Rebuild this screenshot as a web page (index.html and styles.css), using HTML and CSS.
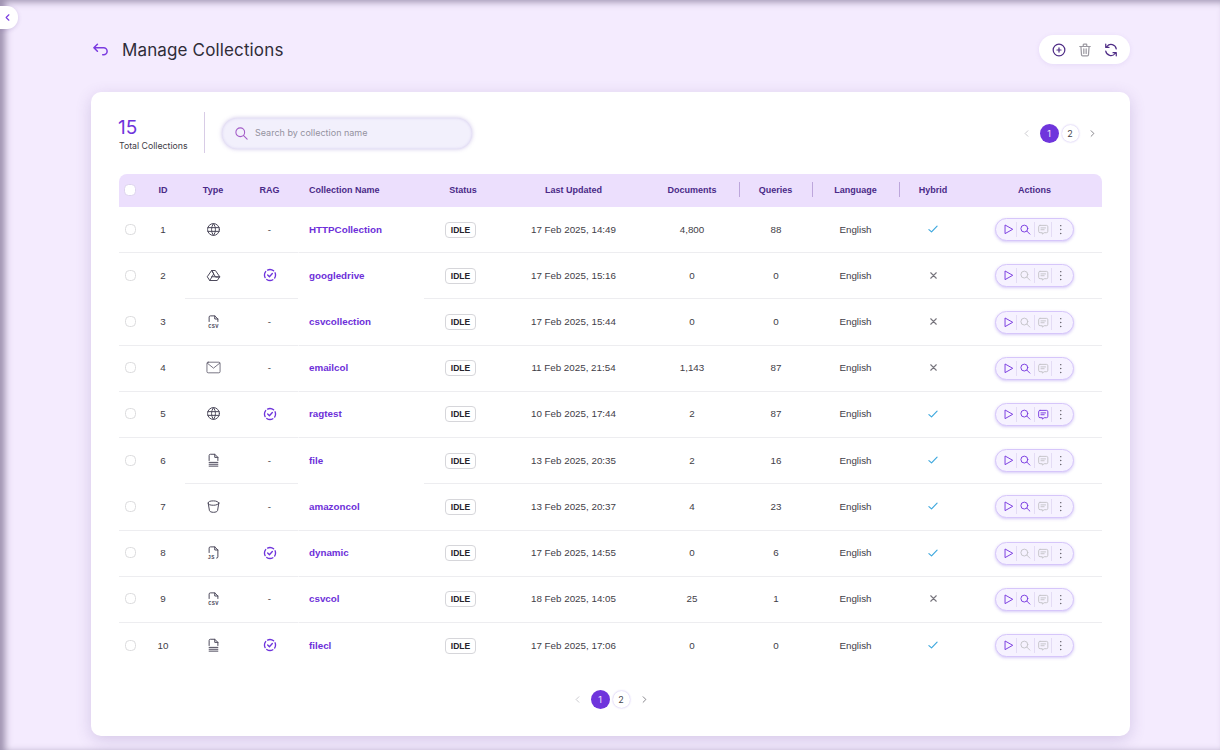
FILE: index.html
```html
<!DOCTYPE html>
<html lang="en">
<head>
<meta charset="utf-8">
<title>Manage Collections</title>
<link rel="stylesheet" href="styles.css">
</head>
<body>
<svg class="defs" aria-hidden="true">
  <symbol id="i-globe" viewBox="0 0 24 24"><circle cx="12" cy="12" r="9.500"/><path d="M3 9h18M3 15h18M11.500 3a17 17 0 0 0 0 18M12.500 3a17 17 0 0 1 0 18"/></symbol>
  <symbol id="i-drive" viewBox="0 0 24 24"><path d="M12 10 6 20l-4-6L9 4zM9 14h13l-4 6H6M15 14 9 4h6l7 10z"/></symbol>
  <symbol id="i-csv" viewBox="0 0 24 24"><path d="M5 12V5a2 2 0 0 1 2-2h7l5 5v4M14 3v5h5"/></symbol>
  <symbol id="i-js" viewBox="0 0 24 24"><path d="M5 12V5a2 2 0 0 1 2-2h7l5 5v11a2 2 0 0 1-2 2M14 3v5h5"/></symbol>
  <symbol id="i-mail" viewBox="0 0 24 24"><rect x="1.500" y="3.500" width="21" height="17" rx="2"/><path d="m2 5 10 8 10-8"/></symbol>
  <symbol id="i-file" viewBox="0 0 24 24"><path d="M5 12V4a2 2 0 0 1 2-2h7l5 5v5M14 2v5h5M5 15h14M5 18h14M5 21h14"/></symbol>
  <symbol id="i-bucket" viewBox="0 0 24 24"><ellipse cx="12" cy="6.500" rx="8.500" ry="3.500"/><path d="m3.500 6.500 2 12c.3 1.600 3.200 2.800 6.500 2.800s6.200-1.200 6.500-2.800l2-12"/></symbol>
  <symbol id="i-rag" viewBox="0 0 24 24"><circle cx="12" cy="12" r="9.500" stroke-dasharray="11 3.920" stroke-dashoffset="5.500"/><path d="m8 12 3 3 5-5.500"/></symbol>
  <symbol id="i-check" viewBox="0 0 24 24"><path d="m5 13 4.500 4L19 7"/></symbol>
  <symbol id="i-x" viewBox="0 0 24 24"><path d="M6 6l12 12M18 6 6 18"/></symbol>
  <symbol id="i-play" viewBox="0 0 24 24"><path d="M5 3v18l16-9z"/></symbol>
  <symbol id="i-search" viewBox="0 0 24 24"><circle cx="10" cy="10" r="7.500"/><path d="m22 22-6.500-6.500"/></symbol>
  <symbol id="i-chat" viewBox="0 0 24 24"><path d="M7 8.500h10M7 12.500h7M5 3h14a3 3 0 0 1 3 3v10a3 3 0 0 1-3 3h-5l-4 3v-3H5a3 3 0 0 1-3-3V6a3 3 0 0 1 3-3z"/></symbol>
  <symbol id="i-dots" viewBox="0 0 24 24"><path d="M12 3.500v.1M12 12v.1M12 20.500v.1"/></symbol>
  <symbol id="i-left" viewBox="0 0 24 24"><path d="m15 6-6 6 6 6"/></symbol>
  <symbol id="i-right" viewBox="0 0 24 24"><path d="m9 6 6 6-6 6"/></symbol>
</svg>

<button class="side-toggle" type="button" aria-label="Collapse"><svg class="ic-toggle"><use href="#i-left"/></svg></button>

<main class="page">
  <header class="page-head">
    <div class="title-wrap">
      <svg class="ic-back" viewBox="4 5 17 14"><path d="M9 14 5 10l4-4M5 10h11a4 4 0 1 1 0 8h-1"/></svg>
      <h1 class="title">Manage Collections</h1>
    </div>
    <div class="tools">
      <svg class="tool" viewBox="0 0 24 24"><circle cx="12" cy="12" r="10"/><path d="M8.500 12h7M12 8.500v7"/></svg>
      <svg class="tool tool-grey" viewBox="0 0 24 24"><path d="M3 6h18M10 10v8M14 10v8M5 6l1 14a2 2 0 0 0 2 2h8a2 2 0 0 0 2-2l1-14M9 6V3a1 1 0 0 1 1-1h4a1 1 0 0 1 1 1v3"/></svg>
      <svg class="tool" viewBox="0 0 24 24"><path d="M21 10A9 9 0 0 0 5 6M3 2v5.500h5.500M3 14a9 9 0 0 0 16 4M21 22v-5.500h-5.500"/></svg>
    </div>
  </header>

  <section class="card">
    <div class="card-top">
      <div class="total">
        <div class="total-num">15</div>
        <div class="total-label">Total Collections</div>
      </div>
      <div class="search">
        <svg class="ic-search" viewBox="0 0 24 24"><circle cx="10" cy="10" r="7"/><path d="m21 21-6-6"/></svg>
        <span class="search-ph">Search by collection name</span>
      </div>
      <nav class="pager pager-top">
        <svg class="pg-arrow pg-off"><use href="#i-left"/></svg>
        <span class="pg-num pg-on">1</span>
        <span class="pg-num">2</span>
        <svg class="pg-arrow pg-end"><use href="#i-right"/></svg>
      </nav>
    </div>

    <table class="grid">
      <colgroup>
        <col class="c-sel"><col class="c-id"><col class="c-type"><col class="c-rag"><col class="c-name"><col class="c-status"><col class="c-upd"><col class="c-docs"><col class="c-q"><col class="c-lang"><col class="c-hyb"><col class="c-act">
      </colgroup>
      <thead>
        <tr>
          <th><span class="box box-head"></span></th>
          <th>ID</th><th>Type</th><th>RAG</th><th class="left">Collection Name</th><th>Status</th><th>Last Updated</th>
          <th class="docs"><span class="docs-in">Documents</span></th><th class="bar">Queries</th><th class="bar">Language</th><th class="bar">Hybrid</th><th>Actions</th>
        </tr>
      </thead>
      <tbody>
        <tr>
          <td><span class="box"></span></td><td>1</td><td><svg class="ty"><use href="#i-globe"/></svg></td><td>-</td><td class="left name">HTTPCollection</td><td><span class="idle">IDLE</span></td><td>17 Feb 2025, 14:49</td><td class="docs"><span class="docs-in">4,800</span></td><td>88</td><td>English</td><td><svg class="yes"><use href="#i-check"/></svg></td>
          <td><div class="acts"><svg class="a on"><use href="#i-play"/></svg><svg class="a on"><use href="#i-search"/></svg><svg class="a"><use href="#i-chat"/></svg><svg class="a dots"><use href="#i-dots"/></svg></div></td>
        </tr>
        <tr class="gap">
          <td><span class="box"></span></td><td>2</td><td><svg class="ty"><use href="#i-drive"/></svg></td><td><svg class="rag"><use href="#i-rag"/></svg></td><td class="left name">googledrive</td><td><span class="idle">IDLE</span></td><td>17 Feb 2025, 15:16</td><td class="docs"><span class="docs-in">0</span></td><td>0</td><td>English</td><td><svg class="no"><use href="#i-x"/></svg></td>
          <td><div class="acts"><svg class="a on"><use href="#i-play"/></svg><svg class="a"><use href="#i-search"/></svg><svg class="a"><use href="#i-chat"/></svg><svg class="a dots"><use href="#i-dots"/></svg></div></td>
        </tr>
        <tr>
          <td><span class="box"></span></td><td>3</td><td><svg class="ty" viewBox="0 0 24 24"><use href="#i-csv"/><text x="12" y="22.500" class="ft">CSV</text></svg></td><td>-</td><td class="left name">csvcollection</td><td><span class="idle">IDLE</span></td><td>17 Feb 2025, 15:44</td><td class="docs"><span class="docs-in">0</span></td><td>0</td><td>English</td><td><svg class="no"><use href="#i-x"/></svg></td>
          <td><div class="acts"><svg class="a on"><use href="#i-play"/></svg><svg class="a"><use href="#i-search"/></svg><svg class="a"><use href="#i-chat"/></svg><svg class="a dots"><use href="#i-dots"/></svg></div></td>
        </tr>
        <tr>
          <td><span class="box"></span></td><td>4</td><td><svg class="ty ty-thin"><use href="#i-mail"/></svg></td><td>-</td><td class="left name">emailcol</td><td><span class="idle">IDLE</span></td><td>11 Feb 2025, 21:54</td><td class="docs"><span class="docs-in">1,143</span></td><td>87</td><td>English</td><td><svg class="no"><use href="#i-x"/></svg></td>
          <td><div class="acts"><svg class="a on"><use href="#i-play"/></svg><svg class="a on"><use href="#i-search"/></svg><svg class="a"><use href="#i-chat"/></svg><svg class="a dots"><use href="#i-dots"/></svg></div></td>
        </tr>
        <tr>
          <td><span class="box"></span></td><td>5</td><td><svg class="ty"><use href="#i-globe"/></svg></td><td><svg class="rag"><use href="#i-rag"/></svg></td><td class="left name">ragtest</td><td><span class="idle">IDLE</span></td><td>10 Feb 2025, 17:44</td><td class="docs"><span class="docs-in">2</span></td><td>87</td><td>English</td><td><svg class="yes"><use href="#i-check"/></svg></td>
          <td><div class="acts"><svg class="a on"><use href="#i-play"/></svg><svg class="a on"><use href="#i-search"/></svg><svg class="a on"><use href="#i-chat"/></svg><svg class="a dots"><use href="#i-dots"/></svg></div></td>
        </tr>
        <tr class="gap">
          <td><span class="box"></span></td><td>6</td><td><svg class="ty"><use href="#i-file"/></svg></td><td>-</td><td class="left name">file</td><td><span class="idle">IDLE</span></td><td>13 Feb 2025, 20:35</td><td class="docs"><span class="docs-in">2</span></td><td>16</td><td>English</td><td><svg class="yes"><use href="#i-check"/></svg></td>
          <td><div class="acts"><svg class="a on"><use href="#i-play"/></svg><svg class="a on"><use href="#i-search"/></svg><svg class="a"><use href="#i-chat"/></svg><svg class="a dots"><use href="#i-dots"/></svg></div></td>
        </tr>
        <tr>
          <td><span class="box"></span></td><td>7</td><td><svg class="ty"><use href="#i-bucket"/></svg></td><td>-</td><td class="left name">amazoncol</td><td><span class="idle">IDLE</span></td><td>13 Feb 2025, 20:37</td><td class="docs"><span class="docs-in">4</span></td><td>23</td><td>English</td><td><svg class="yes"><use href="#i-check"/></svg></td>
          <td><div class="acts"><svg class="a on"><use href="#i-play"/></svg><svg class="a on"><use href="#i-search"/></svg><svg class="a"><use href="#i-chat"/></svg><svg class="a dots"><use href="#i-dots"/></svg></div></td>
        </tr>
        <tr>
          <td><span class="box"></span></td><td>8</td><td><svg class="ty" viewBox="0 0 24 24"><use href="#i-js"/><text x="8.500" y="22.500" class="ft">JS</text></svg></td><td><svg class="rag"><use href="#i-rag"/></svg></td><td class="left name">dynamic</td><td><span class="idle">IDLE</span></td><td>17 Feb 2025, 14:55</td><td class="docs"><span class="docs-in">0</span></td><td>6</td><td>English</td><td><svg class="yes"><use href="#i-check"/></svg></td>
          <td><div class="acts"><svg class="a on"><use href="#i-play"/></svg><svg class="a"><use href="#i-search"/></svg><svg class="a"><use href="#i-chat"/></svg><svg class="a dots"><use href="#i-dots"/></svg></div></td>
        </tr>
        <tr>
          <td><span class="box"></span></td><td>9</td><td><svg class="ty" viewBox="0 0 24 24"><use href="#i-csv"/><text x="12" y="22.500" class="ft">CSV</text></svg></td><td>-</td><td class="left name">csvcol</td><td><span class="idle">IDLE</span></td><td>18 Feb 2025, 14:05</td><td class="docs"><span class="docs-in">25</span></td><td>1</td><td>English</td><td><svg class="no"><use href="#i-x"/></svg></td>
          <td><div class="acts"><svg class="a on"><use href="#i-play"/></svg><svg class="a on"><use href="#i-search"/></svg><svg class="a"><use href="#i-chat"/></svg><svg class="a dots"><use href="#i-dots"/></svg></div></td>
        </tr>
        <tr class="last">
          <td><span class="box"></span></td><td>10</td><td><svg class="ty"><use href="#i-file"/></svg></td><td><svg class="rag"><use href="#i-rag"/></svg></td><td class="left name">filecl</td><td><span class="idle">IDLE</span></td><td>17 Feb 2025, 17:06</td><td class="docs"><span class="docs-in">0</span></td><td>0</td><td>English</td><td><svg class="yes"><use href="#i-check"/></svg></td>
          <td><div class="acts"><svg class="a on"><use href="#i-play"/></svg><svg class="a"><use href="#i-search"/></svg><svg class="a"><use href="#i-chat"/></svg><svg class="a dots"><use href="#i-dots"/></svg></div></td>
        </tr>
      </tbody>
    </table>

    <nav class="pager pager-bottom">
      <svg class="pg-arrow pg-off"><use href="#i-left"/></svg>
      <span class="pg-num pg-on">1</span>
      <span class="pg-num">2</span>
      <svg class="pg-arrow"><use href="#i-right"/></svg>
    </nav>
  </section>
</main>
</body>
</html>
```
FILE: styles.css
```css
* { box-sizing: border-box; }
html, body { margin: 0; height: 750px; overflow: hidden; }
body {
  background: #f4ebfe;
  font-family: Inter, "Liberation Sans", sans-serif;
  color: #3b3a40;
  box-shadow: inset 5px 2px 7px rgba(70, 55, 95, .5);
  position: relative;
}
.defs { position: absolute; width: 0; height: 0; }
svg { fill: none; stroke: currentColor; stroke-linecap: round; stroke-linejoin: round; }
.ft { font: 700 8.5px "Liberation Mono", monospace; text-anchor: middle; fill: currentColor; stroke: none; letter-spacing: .5px; }

.side-toggle {
  position: absolute; left: 0; top: 6px; width: 18px; height: 23px;
  padding: 0; border: 0; background: #fff; border-radius: 0 11px 11px 0;
  display: flex; align-items: center; justify-content: center;
  box-shadow: 0 1px 4px rgba(90, 60, 140, .2);
}
.ic-toggle { width: 11px; height: 11px; color: #7a3be0; margin-left: -3px; stroke-width: 2.4; }

.page { padding: 35px 90px 0 91px; }
.page-head { display: flex; justify-content: space-between; align-items: center; height: 29px; margin-bottom: 28px; }
.title-wrap { display: flex; align-items: center; gap: 14px; margin-left: 2px; }
.ic-back { width: 15px; height: 13px; stroke: #7a3be0; stroke-width: 1.7; }
.title { margin: 0; font-size: 17px; font-weight: 400; color: #2f2c38; letter-spacing: .14px; }
.tools {
  width: 91px; height: 29px; background: #fff; border-radius: 15px;
  display: flex; align-items: center; justify-content: center; gap: 12px;
  box-shadow: 0 1px 5px rgba(120, 80, 200, .1);
}
.tool { width: 14px; height: 14px; stroke: #4f2d86; stroke-width: 2.1; }
.tool-grey { stroke: #9a98a0; }

.card {
  background: #fff; border-radius: 10px; height: 644px; padding: 20px 28px 0;
  box-shadow: 0 4px 16px rgba(90, 60, 140, .2);
}
.card-top { display: flex; align-items: center; height: 41px; margin-bottom: 21px; }
.total { width: 86px; height: 41px; border-right: 1px solid #d8cce6; padding-top: 5px; margin-right: 17px; flex: none; }
.total-num { font-size: 19px; line-height: 21px; color: #6f35dc; margin-left: -1px; }
.total-label { font-size: 8.75px; line-height: 14px; color: #3e3c45; margin-top: 1px; }
.search {
  width: 250px; height: 31px; margin-top: 1px; border-radius: 16px; background: #f2f0fc;
  display: flex; align-items: center; gap: 6px; padding-left: 12px;
  box-shadow: 0 0 4px rgba(110, 80, 190, .35), inset 0 0 3px rgba(110, 80, 190, .2);
}
.ic-search { width: 15px; height: 15px; stroke: #a35cc8; stroke-width: 1.7; }
.search-ph { font-size: 9px; color: #94929f; margin-bottom: 1px; }

.pager { display: flex; align-items: center; }
.pager-top { margin-left: auto; margin-top: 1px; }
.pager-bottom { justify-content: center; margin-top: 21px; }
.pg-arrow { width: 11px; height: 11px; color: #66646c; margin: 0 7px; stroke-width: 1.7; }
.pg-end { margin: 0 4.5px 0 6px; }
.pg-off { color: #bdbcc2; }
.pg-num {
  width: 17px; height: 17px; border-radius: 50%; margin: 0 2px;
  display: flex; align-items: center; justify-content: center;
  font-size: 9px; color: #45434c; background: #fff;
  box-shadow: 0 0 2px rgba(110, 70, 220, .45);
}
.pg-on { width: 19px; height: 19px; margin: 0 1px; background: #6f35dc; color: #f0e8ff; box-shadow: none; }

.grid {
  width: 983px; border-collapse: separate; border-spacing: 0; table-layout: fixed;
  font-family: "Liberation Sans", Arial, sans-serif; font-size: 9.8px;
}
.c-sel { width: 22px; } .c-id { width: 44px; } .c-type { width: 56px; } .c-rag { width: 57px; }
.c-name { width: 126px; } .c-status { width: 78px; } .c-upd { width: 143px; } .c-docs { width: 94px; }
.c-q { width: 73px; } .c-lang { width: 87px; } .c-hyb { width: 68px; } .c-act { width: 135px; }

.grid th {
  height: 33px; padding: 0 0 2px; background: #ecdffd; color: #4a2a88; font-size: 9px; font-weight: 700;
  text-align: center; position: relative;
}
.grid th:first-child { border-radius: 8px 0 0 0; text-align: left; padding-left: 5px; }
.grid th:last-child { border-radius: 0 8px 0 0; }
.grid th.bar::before { content: ""; position: absolute; left: 0; top: 8px; height: 15px; border-left: 1px solid #bda6dc; }
.grid th.left { text-align: left; padding-left: 11px; }
.grid td.left { text-align: left; padding-left: 10px; }
.docs-in { display: inline-block; width: 66px; text-align: center; }

.grid td {
  height: 46.22px; padding: 0 0 1px; text-align: center; vertical-align: middle; color: #3f3d47;
  border-bottom: 1.5px solid #ededf0;
}
.grid td:first-child { text-align: left; padding-left: 6px; }
.grid td:nth-child(9) { padding-left: 1px; }
.grid td.name { font-weight: 700; color: #6d2fd9; border-left: 1px solid #fff; }
.gap td:nth-child(1), .gap td:nth-child(2), .gap td.name { border-bottom-color: #fff; }
.last td { border-bottom-color: transparent; }

.box { display: block; width: 11px; height: 11px; border: 1.5px solid #dcdcde; border-radius: 4.5px; background: #fff; }
.box-head { border-color: #ddd3ee; width: 12px; height: 12px; }

.ty { display: block; margin: 0 auto; width: 15px; height: 15px; color: #4d4a5c; stroke-width: 1.6; }
.ty-thin { stroke-width: 1.2; }
.rag { display: block; margin: 0 auto; width: 14px; height: 14px; color: #6f35dc; stroke-width: 2.3; }
.yes { display: block; margin: 0 auto; width: 14px; height: 14px; color: #3ea8de; stroke-width: 2; }
.no { display: block; margin: 0 auto; width: 11px; height: 11px; color: #77757d; stroke-width: 2.4; }

.idle {
  display: inline-block; width: 31px; height: 16px; line-height: 14px; text-align: center; margin: 1px 5px 0 0;
  border: 1px solid #d6d6da; border-radius: 4px; font-size: 8.5px; font-weight: 700; color: #26242c; background: #fff;
}

.acts {
  width: 79px; height: 23px; margin: 1px auto 0; display: flex; align-items: center; justify-content: flex-start;
  padding-left: 3.5px; border-radius: 12px; background: #f6f2ff; border: 1px solid #d6c6fa;
  box-shadow: 0 1px 3px rgba(120, 80, 230, .3);
}
.a { width: 17.5px; height: 15px; padding: 2px; border-right: 1px solid #e4dcf5; color: #c5c4c9; flex: none; stroke-width: 2.1; }
.a.on { color: #7a3be0; }
.a.dots { border-right: 0; color: #55535c; stroke-width: 3; }
```
